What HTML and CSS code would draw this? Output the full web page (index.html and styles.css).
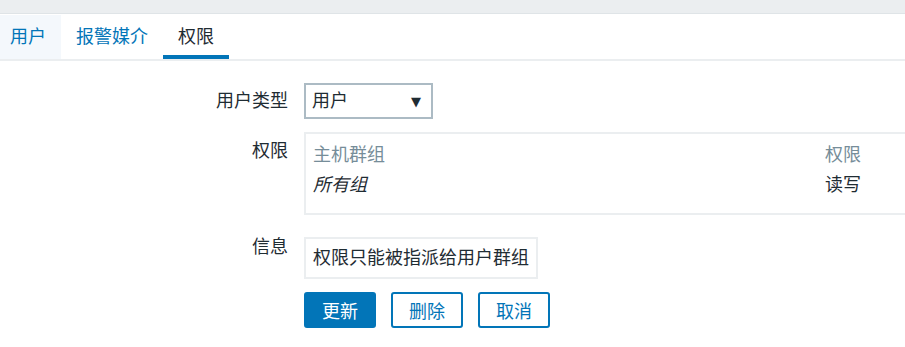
FILE: index.html
```html
<!DOCTYPE html>
<html lang="zh-CN">
<head>
  <meta charset="UTF-8" />
  <meta name="viewport" content="width=device-width, initial-scale=1.0" />
  <title>用户权限</title>
  <link rel="stylesheet" href="styles.css">
</head>
<body>
  <div class="top-bar"></div>

  <!-- Tabs -->
  <ul class="tabs">
    <li class="tab tab-hover"><a href="#">用户</a></li>
    <li class="tab"><a href="#">报警媒介</a></li>
    <li class="tab tab-active"><a href="#">权限</a></li>
  </ul>

  <form class="user-form">
    <div class="form-row row-center">
      <label class="form-label">用户类型</label>
      <div class="select-box">
        <span>用户</span>
        <span class="arrow">▼</span>
      </div>
    </div>

    <!-- the table runs on past the window edge -->
    <div class="form-row row-perm">
      <label class="form-label label-perm">权限</label>
      <div class="perm-box">
        <table class="perm-table">
          <tr>
            <th class="col-group">主机群组</th>
            <th>权限</th>
          </tr>
          <tr>
            <td class="col-group"><em>所有组</em></td>
            <td>读写</td>
          </tr>
        </table>
      </div>
    </div>

    <div class="form-row row-info">
      <label class="form-label">信息</label>
      <div class="info-box">权限只能被指派给用户群组</div>
    </div>

    <div class="form-row">
      <div class="form-label"></div>
      <div class="buttons">
        <button type="button" class="btn btn-main">更新</button>
        <button type="button" class="btn btn-alt">删除</button>
        <button type="button" class="btn btn-alt">取消</button>
      </div>
    </div>
  </form>
</body>
</html>
```

FILE: styles.css
```css
body {
  margin: 0;
  font-family: "Liberation Sans", "Noto Sans CJK SC", sans-serif;
  font-size: 18px;
  color: #1f2c33;
  background: #fff;
  overflow: hidden;
}
.top-bar {
  height: 13px;
  background: #ebeef0;
  border-bottom: 1px solid #dfe4e7;
}
.tabs {
  display: flex;
  list-style: none;
  margin: 0 0 0 -5px;
  padding: 1px 0 0 0;
  border-bottom: 2px solid #ebeef0;
}
.tab a {
  display: block;
  height: 44px;
  line-height: 44px;
  padding: 0 15px;
  color: #0275b8;
  text-decoration: none;
}
.tab-hover a {
  background: #f4f8fc;
}
.tab-active a {
  color: #1f2c33;
  box-shadow: inset 0 -4px 0 #0275b8;
}
.user-form {
  padding-top: 22px;
}
.form-row {
  display: flex;
  align-items: flex-start;
  margin-bottom: 13px;
}
.row-center {
  align-items: center;
}
.row-perm {
  margin-bottom: 22px;
  overflow: hidden;
}
.form-label {
  width: 288px;
  margin-right: 16px;
  text-align: right;
  line-height: 20px;
  flex-shrink: 0;
}
.label-perm {
  padding-top: 9px;
}
.select-box {
  box-sizing: border-box;
  width: 129px;
  height: 36px;
  border: 2px solid #acbbc4;
  display: flex;
  align-items: center;
  justify-content: space-between;
  padding: 0 10px 0 6px;
  line-height: 1;
}
.select-box .arrow {
  font-size: 13px;
  font-family: "DejaVu Sans", sans-serif;
}
.perm-box {
  width: 700px;
  flex-shrink: 0;
  border: 2px solid #ebeef0;
  padding: 6px 7px 13px;
}
.perm-table {
  border-collapse: collapse;
}
.perm-table th,
.perm-table td {
  height: 30px;
  padding: 0;
  text-align: left;
  font-weight: normal;
  line-height: 30px;
}
.perm-table th {
  color: #768d99;
}
.perm-table .col-group {
  width: 512px;
}
.info-box {
  border: 2px solid #ebeef0;
  padding: 0 7px;
  height: 38px;
  line-height: 38px;
  white-space: nowrap;
}
.buttons {
  display: flex;
  gap: 15px;
}
.btn {
  box-sizing: border-box;
  height: 36px;
  width: 72px;
  padding: 0;
  border-radius: 3px;
  font-family: inherit;
  font-size: 18px;
  cursor: pointer;
}
.btn-main {
  background: #0275b8;
  border: 2px solid #0275b8;
  color: #fff;
}
.btn-alt {
  background: #fff;
  border: 2px solid #0275b8;
  color: #0275b8;
}
```
